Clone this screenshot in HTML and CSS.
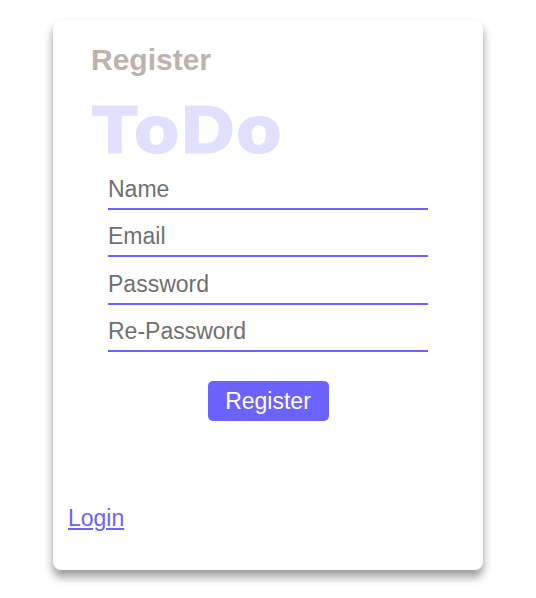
FILE: index.html
```html
<!DOCTYPE html>
<html lang="en">
<head>
<meta charset="utf-8">
<title>Register - ToDo</title>
<link rel="stylesheet" href="styles.css">
</head>
<body>
<main class="card">
  <h2 class="title">Register</h2>
  <h1 class="brand"><span class="brand-text">ToDo</span></h1>
  <form class="form">
    <input class="field" type="text" placeholder="Name">
    <input class="field" type="email" placeholder="Email">
    <input class="field" type="password" placeholder="Password">
    <input class="field" type="password" placeholder="Re-Password">
    <button class="btn" type="button">Register</button>
  </form>
  <a class="link" href="#">Login</a>
</main>
</body>
</html>
```
FILE: styles.css
```css
* { box-sizing: border-box; }
html, body { margin: 0; padding: 0; background: #ffffff; }
body {
  font-family: "Liberation Sans", Arial, sans-serif;
  padding-top: 20px;
  min-height: 598px;
}
.card {
  width: 430px;
  height: 550px;
  margin: 0 auto;
  background: #ffffff;
  border-radius: 8px;
  box-shadow: 0 7px 10px rgba(0, 0, 0, 0.4);
  padding: 22px 15px 0 15px;
  display: flex;
  flex-direction: column;
}
.title {
  margin: 0 0 0 23px;
  font-size: 30px;
  line-height: 35px;
  font-weight: 700;
  color: #bdb3aa;
}
.brand {
  margin: 17px 0 0 25px;
  font-size: 64px;
  line-height: 72px;
  font-weight: 700;
  color: #e1e0ff;
}
.brand-text {
  display: inline-block;
  letter-spacing: 3px;
  -webkit-text-stroke: 3px #e1e0ff;
  transform: scaleX(1.12);
  transform-origin: left center;
}
.form {
  margin-top: 11px;
  display: flex;
  flex-direction: column;
  align-items: center;
  gap: 14.33px;
}
.field {
  width: 320px;
  height: 33px;
  border: none;
  border-bottom: 2px solid #6c63ff;
  padding: 0 0 6px 0;
  margin: 0;
  font-family: "Liberation Sans", Arial, sans-serif;
  font-size: 23px;
  line-height: 25px;
  color: #444;
  background: transparent;
  outline: none;
}
.field::placeholder { color: #707070; opacity: 1; }
.btn {
  margin-top: 15px;
  width: 121px;
  height: 40px;
  border: none;
  border-radius: 5px;
  background: #6c63ff;
  color: #ffffff;
  font-family: "Liberation Sans", Arial, sans-serif;
  font-size: 23px;
  padding: 0;
}
.link {
  margin-top: 85px;
  align-self: flex-start;
  font-size: 23px;
  line-height: 25px;
  color: #6c63ff;
  text-decoration: underline;
}
```
